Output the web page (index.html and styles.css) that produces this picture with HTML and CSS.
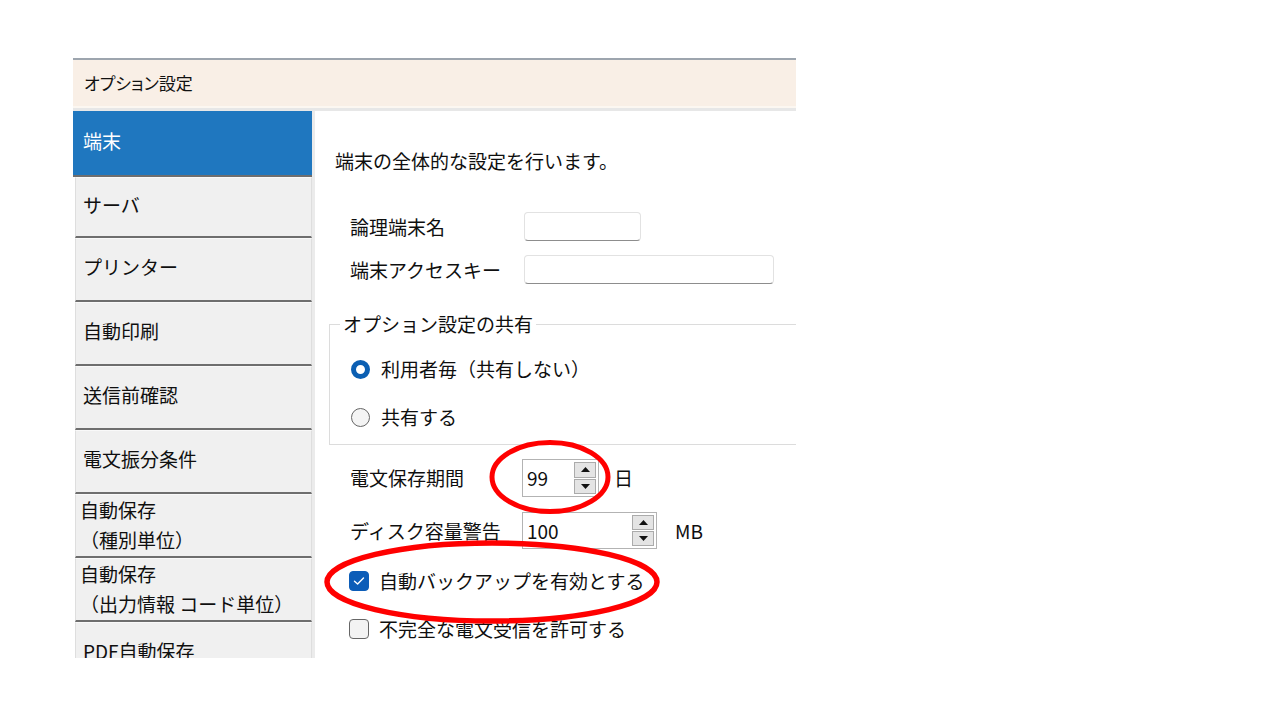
FILE: index.html
```html
<!DOCTYPE html>
<html lang="ja">
<head>
<meta charset="utf-8">
<title>オプション設定</title>
<link rel="stylesheet" href="styles.css">
</head>
<body>
<div class="stage">
  <div class="window">
    <div class="titlebar">オプション設定</div>
    <div class="main">
      <nav class="sidebar">
        <div class="item active">端末</div>
        <div class="item second">サーバ</div>
        <div class="item">プリンター</div>
        <div class="item">自動印刷</div>
        <div class="item">送信前確認</div>
        <div class="item">電文振分条件</div>
        <div class="item two">自動保存<br>（種別単位）</div>
        <div class="item two">自動保存<br>（出力情報 コード単位）</div>
        <div class="item">PDF自動保存</div>
      </nav>
      <div class="divider"></div>
      <section class="content">
        <p class="desc">端末の全体的な設定を行います。</p>
        <div class="fields">
          <div class="field">
            <span class="label">論理端末名</span>
            <span class="textbox short"></span>
          </div>
          <div class="field">
            <span class="label">端末アクセスキー</span>
            <span class="textbox long"></span>
          </div>
        </div>
        <fieldset class="group">
          <legend>オプション設定の共有</legend>
          <div class="radio-row">
            <span class="radio on"></span>
            <span>利用者毎（共有しない）</span>
          </div>
          <div class="radio-row second-radio">
            <span class="radio"></span>
            <span>共有する</span>
          </div>
        </fieldset>
        <div class="spins">
          <div class="spin-row">
            <span class="spin-label">電文保存期間</span>
            <span class="spin small">
              <span class="spin-value">99</span>
              <span class="spin-buttons">
                <span class="spin-btn"><svg width="9" height="5" viewBox="0 0 9 5"><path d="M0 5 L4.5 0 L9 5 Z" fill="#111"/></svg></span>
                <span class="spin-btn"><svg width="9" height="5" viewBox="0 0 9 5"><path d="M0 0 L9 0 L4.5 5 Z" fill="#111"/></svg></span>
              </span>
            </span>
            <span class="unit day">日</span>
          </div>
          <div class="spin-row second-spin">
            <span class="spin-label">ディスク容量警告</span>
            <span class="spin wide">
              <span class="spin-value">100</span>
              <span class="spin-buttons">
                <span class="spin-btn"><svg width="9" height="5" viewBox="0 0 9 5"><path d="M0 5 L4.5 0 L9 5 Z" fill="#111"/></svg></span>
                <span class="spin-btn"><svg width="9" height="5" viewBox="0 0 9 5"><path d="M0 0 L9 0 L4.5 5 Z" fill="#111"/></svg></span>
              </span>
            </span>
            <span class="unit mb">MB</span>
          </div>
        </div>
        <div class="check-row first-check">
          <span class="checkbox on"><svg width="12" height="10" viewBox="0 0 12 10"><path d="M1.5 5.2 L4.6 8 L10.5 2" fill="none" stroke="#fff" stroke-width="1.4" stroke-linecap="round" stroke-linejoin="round"/></svg></span>
          <span>自動バックアップを有効とする</span>
        </div>
        <div class="check-row second-check">
          <span class="checkbox"></span>
          <span>不完全な電文受信を許可する</span>
        </div>
      </section>
    </div>
  </div>
  <svg class="marks" width="1280" height="720" viewBox="0 0 1280 720">
    <ellipse cx="550" cy="477" rx="58" ry="34.5" fill="none" stroke="#f00" stroke-width="5"/>
    <ellipse cx="492" cy="582" rx="165" ry="39" fill="none" stroke="#f00" stroke-width="5.5"/>
  </svg>
</div>
</body>
</html>
```

FILE: styles.css
```css
* { box-sizing: border-box; }

html, body {
  margin: 0;
  padding: 0;
  background: #ffffff;
}

body {
  font-family: "Noto Sans CJK JP", "Noto Sans", "Liberation Sans", sans-serif;
  font-weight: 400;
  color: #0f0f0f;
}

.stage {
  position: relative;
  width: 1280px;
  height: 720px;
  padding: 58px 0 0 73px;
  overflow: hidden;
}

.window {
  width: 723px;
  height: 600px;
  overflow: hidden;
  background: #ffffff;
  display: flex;
  flex-direction: column;
}

.titlebar {
  height: 53px;
  flex-shrink: 0;
  border-top: 2px solid #9da5ae;
  border-bottom: 3px solid #e7e7e7;
  background: #f9efe6;
  box-shadow: inset 0 -2px 0 #fcf7f1;
  padding-left: 11px;
  font-size: 17px;
  line-height: 46px;
  font-feature-settings: "palt";
  color: #111;
}

.main {
  display: flex;
  flex: 1;
  min-height: 0;
}

.sidebar {
  width: 239px;
  flex-shrink: 0;
  display: flex;
  flex-direction: column;
}

.item {
  height: 64px;
  flex-shrink: 0;
  margin-left: 2px;
  background: #f0f0f0;
  border-left: 1px solid #dedede;
  border-right: 1px solid #dedede;
  border-top: 1px solid #f9f9f9;
  border-bottom: 2px solid #6e6e6e;
  padding: 0 0 5px 7px;
  display: flex;
  align-items: center;
  font-size: 19px;
  line-height: 30px;
  color: #0f0f0f;
  white-space: nowrap;
}

.item.active {
  height: 66px;
  margin-left: 0;
  padding-left: 10px;
  background: #1f77bf;
  border-left: none;
  border-right: none;
  border-top: none;
  color: #ffffff;
}

.item.second { height: 61px; }

.item.two {
  align-items: flex-start;
  padding-top: 0;
  padding-left: 4px;
}

.divider {
  width: 3px;
  flex-shrink: 0;
  background: #ebebeb;
}

.content {
  flex: 1;
  min-width: 0;
  padding: 36px 0 0 20px;
  font-size: 19px;
  line-height: 28px;
}

.desc {
  margin: 0;
}

.fields {
  margin-top: 37px;
  padding-left: 15px;
  display: flex;
  flex-direction: column;
  gap: 14px;
}

.field {
  display: flex;
  align-items: center;
  height: 29px;
}

.label {
  width: 174px;
  flex-shrink: 0;
}

.textbox {
  display: block;
  height: 29px;
  background: #ffffff;
  border: 1px solid #e2e2e2;
  border-bottom: 1px solid #8d8d8d;
  border-radius: 4px;
}

.textbox.short { width: 117px; }
.textbox.long { width: 250px; }

.group {
  margin: 26px -40px 0 -6px;
  padding: 17px 0 13px 10px;
  border: 1px solid #dcdcdc;
  min-width: 0;
}

.group legend {
  padding: 0 3px;
  line-height: 28px;
}

.radio-row {
  display: flex;
  align-items: center;
  gap: 11px;
  margin-left: 11px;
  height: 28px;
}

.second-radio { margin-top: 20px; }

.radio {
  width: 19px;
  height: 19px;
  border-radius: 50%;
  border: 1px solid #666;
  background: #f4f4f4;
  flex-shrink: 0;
}

.radio.on {
  border: 5px solid #0b5fb3;
  background: #ffffff;
}

.spins {
  margin-top: 14px;
  padding-left: 15px;
  display: flex;
  flex-direction: column;
  gap: 15px;
}

.spin-row {
  display: flex;
  align-items: center;
}

.spin-label {
  width: 172px;
  flex-shrink: 0;
}

.spin {
  display: flex;
  justify-content: space-between;
  height: 38px;
  border: 1px solid #b3b3b3;
  background: #ffffff;
  padding: 2px 2px 2px 4px;
}

.spin.small { width: 77px; }
.spin.wide { width: 135px; height: 37px; }

.spin-value {
  line-height: 32px;
  font-size: 19px;
}

.spin-buttons {
  display: flex;
  flex-direction: column;
  gap: 1px;
  width: 22px;
}

.spin-btn {
  flex: 1;
  display: flex;
  align-items: center;
  justify-content: center;
  background: #e4e4e4;
  border: 1px solid #ababab;
}

.unit.day { margin-left: 15px; }
.unit.mb { margin-left: 18px; }

.check-row {
  display: flex;
  align-items: center;
  gap: 10px;
  height: 28px;
  padding-left: 14px;
}

.first-check { margin-top: 18px; }
.second-check { margin-top: 20px; }

.checkbox {
  width: 20px;
  height: 20px;
  border-radius: 4px;
  border: 1px solid #666;
  background: #f3f3f3;
  flex-shrink: 0;
  display: flex;
  align-items: center;
  justify-content: center;
}

.checkbox.on {
  background: #0d5db8;
  border-color: #0d5db8;
}

.marks {
  position: absolute;
  left: 0;
  top: 0;
  pointer-events: none;
}
```
